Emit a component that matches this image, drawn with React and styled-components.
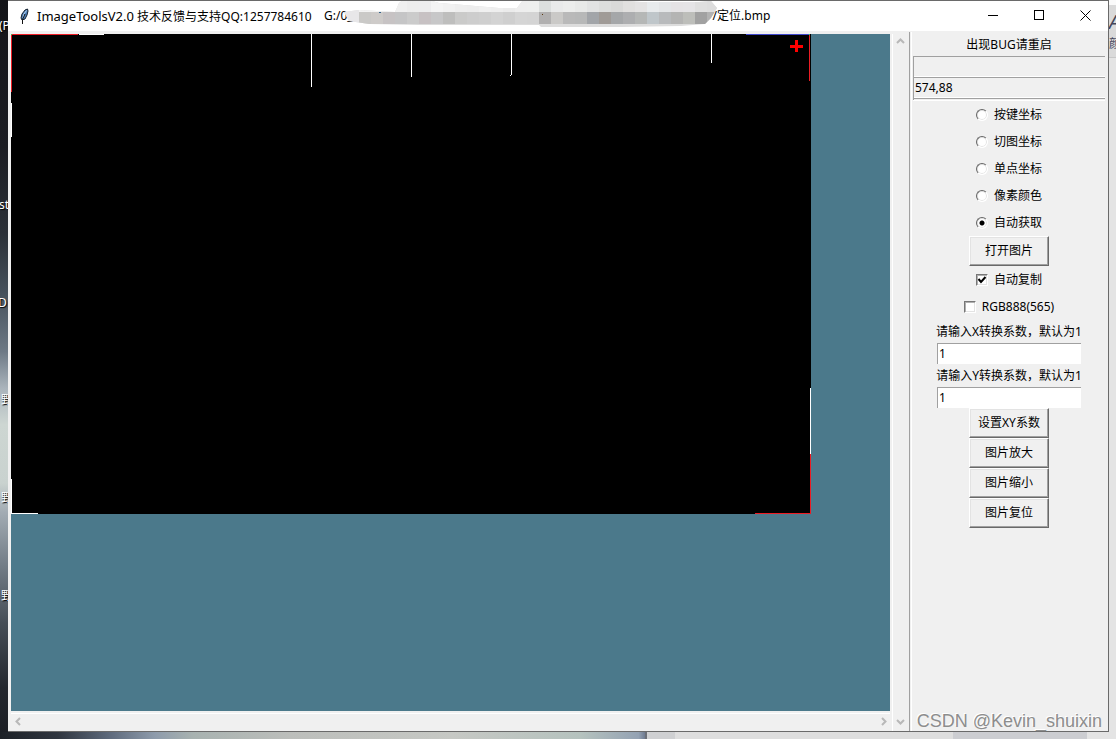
import React, { useState } from "react";
import styled, { createGlobalStyle, css } from "styled-components";

const GlobalStyle = createGlobalStyle`
  * { box-sizing: border-box; }
  body {
    margin: 0;
    font-family: "Noto Sans", "Noto Sans CJK SC", sans-serif;
    font-size: 12px;
    line-height: 16px;
    color: #000;
  }
  input, button { font: inherit; color: inherit; margin: 0; }
`;

const Desktop = styled.div`
  position: relative;
  display: grid;
  grid-template-columns: 8px minmax(0, 1fr) 7px;
  grid-template-rows: minmax(0, 1fr) 7px;
  min-height: 100vh;
`;

const LeftStrip = styled.div`
  position: relative;
  overflow: hidden;
  background: linear-gradient(
    #141519 0%, #1b1c22 20%, #2b3037 32%, #45505b 40%, #6d7985 48%,
    #a9b3bb 53%, #cdd6d2 58%, #c9d2cf 66%, #a2abb3 70%, #747e88 77%,
    #464e57 85%, #23272e 94%, #1c1f25 100%
  );
`;

const DesktopLabel = styled.span`
  position: absolute;
  top: ${(p) => p.$top}px;
  left: ${(p) => p.$left}px;
  color: #fff;
  white-space: nowrap;
  text-shadow: 1px 1px 1px #000;
`;

const RightStrip = styled.div`
  position: relative;
  overflow: hidden;
  background: linear-gradient(#fafafa 0 5px, #dadada 5px 57px, #c8c8c8 57px 58px, #e4e4e4 58px);
`;

const RibbonLabel = styled.span`
  position: absolute;
  top: ${(p) => p.$top}px;
  left: 0;
  color: #44465a;
  font-size: ${(p) => p.$size || 12}px;
  font-style: ${(p) => (p.$size ? "italic" : "normal")};
`;

const BottomStrip = styled.div`
  grid-column: 1 / -1;
  display: flex;
  background: #ddd;
`;

const Wallpaper = styled.div`
  flex: 0 0 58%;
  padding-left: 315px;
  border-right: 2px solid #6c7078;
  background: linear-gradient(
    90deg, #1c2026 0%, #303640 9%, #5e6a7c 17%, #8e9bab 24%, #a8b2b0 30%,
    #bcbebb 45%, #c6c8c4 70%, #b5c2be 90%, #94a2b3 99%, #6f7b91 100%
  );
`;

const Taskbar = styled.div`
  flex: 1;
  background: linear-gradient(90deg, #cfd0d2 0 28px, #dedede 28px 306px, #cccdd1 306px 440px, #e4e4e4 440px);
`;

const Window = styled.main`
  display: flex;
  flex-direction: column;
  background: #f0f0f0;
  border: solid #6a6a6a;
  border-width: 1px 1px 1px 0;
`;

const TitleBar = styled.header`
  display: flex;
  align-items: center;
  height: 30px;
  padding-left: 8px;
  background: #fff;
  white-space: pre;
`;

const AppTitle = styled.h1`
  flex: 0 0 275px;
  margin: 0 12px 0 4px;
  font-size: 12px;
  font-weight: 400;
`;

const ProductName = styled.span`
  font-size: 13px;
`;

const RedactedPath = styled.svg`
  align-self: flex-start;
  flex: none;
  margin: 0 -5px 0 -9px;
`;

const WindowButtons = styled.div`
  display: flex;
  margin-left: auto;
`;

const WindowButton = styled.button`
  display: grid;
  place-items: center;
  width: 46px;
  height: 30px;
  padding: 0 0 2px;
  border: 0;
  background: none;
`;

const Body = styled.div`
  flex: 1;
  display: grid;
  grid-template-columns: minmax(0, 1fr) 199px;
`;

const Viewer = styled.section`
  display: grid;
  grid-template-columns: minmax(0, 1fr) 17px;
  grid-template-rows: minmax(480px, 1fr) 18px;
  gap: 2px;
  padding: 3px 0 0 3px;
`;

const Canvas = styled.div`
  overflow: hidden;
  background: #4b798b;
  svg { display: block; }
`;

const ScrollTrack = styled.div`
  display: flex;
  justify-content: space-between;
  ${(p) =>
    p.$vertical
      ? css`
          grid-column: 2;
          grid-row: 1 / 3;
          flex-direction: column;
          padding-bottom: 2px;
          border-left: 1px solid #fff;
        `
      : css`
          border-top: 1px solid #fff;
        `}
`;

const ScrollButton = styled.button`
  display: grid;
  place-items: center;
  width: 14px;
  height: 15px;
  padding: 0;
  border: 0;
  background: none;
`;

const Panel = styled.aside`
  display: flex;
  flex-direction: column;
  align-items: center;
  margin-top: 1px;
  padding-top: 2px;
  border-left: 1px solid #a0a0a0;
  box-shadow: inset 1px 0 #f0f0f0, inset 2px 0 #fff;
`;

const Notice = styled.p`
  height: 22px;
  margin: 0;
  line-height: 22px;
`;

const Readouts = styled.div`
  align-self: stretch;
  margin: 0 3px;
  border-bottom: 1px solid #fff;
`;

const Readout = styled.input`
  display: block;
  width: 100%;
  height: 21px;
  padding: 0 1px 2px;
  border: solid #a0a0a0;
  border-width: 1px 0 0 1px;
  border-radius: 0;
  background: #f0f0f0;
  box-shadow: inset 0 -1px #fff;
  outline: 0;
`;

const Ridge = styled.div`
  height: 2px;
  border-top: 1px solid #a0a0a0;
  border-left: 1px solid #a0a0a0;
`;

const Modes = styled.fieldset`
  margin: 0;
  padding: 0;
  border: 0;
`;

const Option = styled.label`
  display: flex;
  align-items: center;
  justify-content: center;
  gap: 6px;
  height: 27px;
`;

const Radio = styled.input.attrs({ type: "radio" })`
  appearance: none;
  width: 12px;
  height: 12px;
  border: 1px solid;
  border-color: #666 #fff #fff #666;
  border-radius: 50%;
  background: #fff;
  box-shadow: inset 0 0 0 1px #e3e3e3;
  &:checked {
    background: radial-gradient(circle at 5px 5px, #000 0 2px, #fff 3px);
  }
`;

const TickBox = styled.span`
  display: grid;
  width: 12px;
  height: 12px;
  > * { grid-area: 1 / 1; }
  svg { pointer-events: none; }
`;

const Check = styled.input.attrs({ type: "checkbox" })`
  appearance: none;
  width: 12px;
  height: 12px;
  border: 1px solid;
  border-color: #777 #fff #fff #777;
  background: #fff;
  box-shadow: inset 1px 1px #b0b0b0, inset -1px -1px #e3e3e3;
  & + svg { visibility: hidden; }
  &:checked + svg { visibility: visible; }
`;

const PushButton = styled.button`
  width: 80px;
  height: 30px;
  padding: 0;
  border: 1px solid;
  border-color: #fff #696969 #696969 #fff;
  background: #f0f0f0;
  box-shadow: inset -1px -1px #a0a0a0, inset 1px 1px #e3e3e3;
`;

const FieldLabel = styled.label`
  height: 23px;
  line-height: 23px;
`;

const Field = styled.input`
  width: 144px;
  height: 21px;
  padding: 0 1px 1px;
  border: solid #a0a0a0;
  border-width: 1px 0 0 1px;
  border-radius: 0;
  background: #fff;
  outline: 0;
`;

const Watermark = styled.span`
  position: absolute;
  right: 14px;
  bottom: 8px;
  font: 18px/20px "Liberation Sans", sans-serif;
  color: #8d8d8d;
  text-shadow: -1px -1px #fff;
`;

const upperTones = [
  "#f3f3f3", "#f3f3f3", "#f3f3f3", "#f0f0f0", "#ededed", "#ededee", "#f4f4f4", "#f1f1f1", "#eeeeee", "#ededed",
  "#f0f0f0", "#eeeeee", "#ebebeb", "#eeeeee", "#eeefee", "#dcdfde", "#e9eaea", "#ecedec", "#e8e9e8", "#e2e3e3",
  "#dddedd", "#dadad9", "#e1e0df", "#e4e3e3", "#e8ebed", "#e4e6e8", "#e5e3e5", "#e5e4e6", "#dfdfdf", "#dddddd",
];
const lowerTones = [
  "#cac9c7", "#cecbc9", "#c7c3c4", "#c5c5c6", "#cbcbcb", "#c7c1c3", "#c7c7c8", "#bebebd", "#cacac9", "#cdcdcd",
  "#cfcfcf", "#d3d3d3", "#cfcfcf", "#d5d5d5", "#d4d4d4", "#b1b0b0", "#cac9c7", "#b9b9b9", "#b7b8b8", "#a2a5a9",
  "#a09b97", "#a5a7a9", "#adaeb0", "#b5b7b6", "#bfc6ca", "#b8babc", "#b4b4b3", "#bdbeba", "#a1a1a1", "#b2b2b2",
];

function Feather() {
  return (
    <svg width="17" height="17" viewBox="0 0 17 17" aria-hidden="true">
      <path d="M11.5 1 9 2 6 6 5 10l1 2 3-1 2-4 1-4z" fill="#4d7fb8" stroke="#14202e" strokeWidth="1" />
      <path d="M10.5 2.5 8 6l-1 4" fill="none" stroke="#b9d7f3" strokeWidth="1" />
      <path d="M9 6 6.5 11.5V16" fill="none" stroke="#111" strokeWidth="1" />
    </svg>
  );
}

function Mosaic() {
  return (
    <RedactedPath width="374" height="28" viewBox="345 1 374 28" aria-hidden="true">
      <clipPath id="smear">
        <path d="M345 12l15-2 36 2 4-9 4-3h26l10 3 25 2 35 3h18l6-8h88l30 2h58l12-1 6 7-6 10-6 6-24 2-60 1-80 0-2-2h-120l-50-1-20-3z" />
      </clipPath>
      <g clipPath="url(#smear)">
        <rect x="345" y="0" width="374" height="29" fill="#dcdcdc" />
        <rect x="345" y="0" width="15" height="29" fill="#e8e7e9" />
        {upperTones.map((tone, i) => (
          <rect key={i} x={360 + i * 12} y="0" width="12" height="12" fill={tone} />
        ))}
        {lowerTones.map((tone, i) => (
          <rect key={i} x={360 + i * 12} y="12" width="12" height="12" fill={tone} />
        ))}
      </g>
      <rect x="380" y="12" width="2" height="1" fill="#36648c" />
      <rect x="543" y="14" width="1" height="1" fill="#5c3a10" />
    </RedactedPath>
  );
}

function Bitmap() {
  return (
    <svg width="800" height="480" viewBox="0 0 800 480" shapeRendering="crispEdges" role="img" aria-label="定位.bmp">
      <rect width="800" height="480" fill="#000" />
      <g fill="#ed1c24">
        <rect width="67" height="1" />
        <rect width="1" height="58" />
        <rect x="798" y="1" width="1" height="46" />
        <rect x="799" y="420" width="1" height="60" />
        <rect x="744" y="479" width="56" height="1" />
      </g>
      <g fill="#fff">
        <rect x="68" width="25" height="1" />
        <rect y="69" width="1" height="34" />
        <rect y="445" width="1" height="35" />
        <rect y="479" width="27" height="1" />
        <rect x="300" width="1" height="53" />
        <rect x="400" width="1" height="43" />
        <rect x="500" width="1" height="41" />
        <rect x="499" y="41" width="1" height="1" />
        <rect x="700" width="1" height="29" />
        <rect x="799" y="354" width="1" height="66" />
      </g>
      <rect x="735" width="64" height="1" fill="#3f48cc" />
      <rect width="1" height="1" fill="#22e04c" />
      <rect x="798" width="1" height="1" fill="#22e04c" />
      <path d="M779 11h5v-5h3v5h5v3h-5v4h-3v-4h-5z" fill="#f00" />
    </svg>
  );
}

const arrows = {
  up: "M1 6l3.500-3.500L8 6",
  down: "M1 3l3.500 3.500L8 3",
  left: "M6 1 2.500 4.500 6 8",
  right: "M3 1l3.500 3.500L3 8",
};

function Arrow({ to, label }) {
  return (
    <ScrollButton aria-label={label}>
      <svg width="9" height="9" viewBox="0 0 9 9" fill="none" stroke="#b8b8b8" strokeWidth="2">
        <path d={arrows[to]} />
      </svg>
    </ScrollButton>
  );
}

const modes = ["按键坐标", "切图坐标", "单点坐标", "像素颜色", "自动获取"];

function TickOption({ label, initial }) {
  return (
    <Option>
      <TickBox>
        <Check defaultChecked={initial} />
        <svg width="12" height="12" viewBox="0 0 12 12" fill="none" stroke="#000" strokeWidth="2">
          <path d="M2.5 5 5 8l4.500-5" />
        </svg>
      </TickBox>
      {label}
    </Option>
  );
}

export default function App() {
  const [mode, setMode] = useState("自动获取");
  return (
    <>
      <GlobalStyle />
      <Desktop>
        <LeftStrip aria-hidden="true">
          <DesktopLabel $top={18} $left={-1}>(P</DesktopLabel>
          <DesktopLabel $top={197} $left={-1}>st</DesktopLabel>
          <DesktopLabel $top={295} $left={-2}>D</DesktopLabel>
          <DesktopLabel $top={392} $left={1}>野</DesktopLabel>
          <DesktopLabel $top={490} $left={1}>野</DesktopLabel>
          <DesktopLabel $top={588} $left={1}>野</DesktopLabel>
        </LeftStrip>
        <Window>
          <TitleBar>
            <Feather />
            <AppTitle>
              <ProductName>ImageToolsV2.0</ProductName> 技术反馈与支持QQ:1257784610
            </AppTitle>
            <span>G:/0_</span>
            <Mosaic />
            <span>/定位.bmp</span>
            <WindowButtons>
              <WindowButton aria-label="最小化">
                <svg width="11" height="11" stroke="#000" fill="none" shapeRendering="crispEdges">
                  <path d="M0 5.500h10" />
                </svg>
              </WindowButton>
              <WindowButton aria-label="最大化">
                <svg width="11" height="11" stroke="#000" fill="none" shapeRendering="crispEdges">
                  <path d="M.5.5h9v9h-9z" />
                </svg>
              </WindowButton>
              <WindowButton aria-label="关闭">
                <svg width="11" height="11" stroke="#000" fill="none">
                  <path d="M.5.5l10 10M10.500.5l-10 10" />
                </svg>
              </WindowButton>
            </WindowButtons>
          </TitleBar>
          <Body>
            <Viewer>
              <Canvas>
                <Bitmap />
              </Canvas>
              <ScrollTrack $vertical>
                <Arrow to="up" label="向上" />
                <Arrow to="down" label="向下" />
              </ScrollTrack>
              <ScrollTrack>
                <Arrow to="left" label="向左" />
                <Arrow to="right" label="向右" />
              </ScrollTrack>
            </Viewer>
            <Panel>
              <Notice>出现BUG请重启</Notice>
              <Readouts>
                <Readout readOnly aria-label="颜色" value="" />
                <Readout readOnly aria-label="坐标" value="574,88" />
                <Ridge />
              </Readouts>
              <Modes aria-label="模式">
                {modes.map((name) => (
                  <Option key={name}>
                    <Radio name="mode" checked={mode === name} onChange={() => setMode(name)} />
                    {name}
                  </Option>
                ))}
              </Modes>
              <PushButton>打开图片</PushButton>
              <TickOption label="自动复制" initial />
              <TickOption label="RGB888(565)" />
              <FieldLabel htmlFor="factor-x">请输入X转换系数，默认为1</FieldLabel>
              <Field id="factor-x" defaultValue="1" />
              <FieldLabel htmlFor="factor-y">请输入Y转换系数，默认为1</FieldLabel>
              <Field id="factor-y" defaultValue="1" />
              <PushButton>设置XY系数</PushButton>
              <PushButton>图片放大</PushButton>
              <PushButton>图片缩小</PushButton>
              <PushButton>图片复位</PushButton>
            </Panel>
          </Body>
        </Window>
        <RightStrip aria-hidden="true">
          <RibbonLabel $top={14} $size={20}>A</RibbonLabel>
          <RibbonLabel $top={36}>颜</RibbonLabel>
        </RightStrip>
        <BottomStrip aria-hidden="true">
          <Wallpaper>
            <svg width="28" height="7" viewBox="0 0 28 7">
              <path d="M.5 7V4.500h23l3 2.500" fill="#dcdcdc" stroke="#777" />
            </svg>
          </Wallpaper>
          <Taskbar />
        </BottomStrip>
        <Watermark>CSDN @Kevin_shuixin</Watermark>
      </Desktop>
    </>
  );
}
